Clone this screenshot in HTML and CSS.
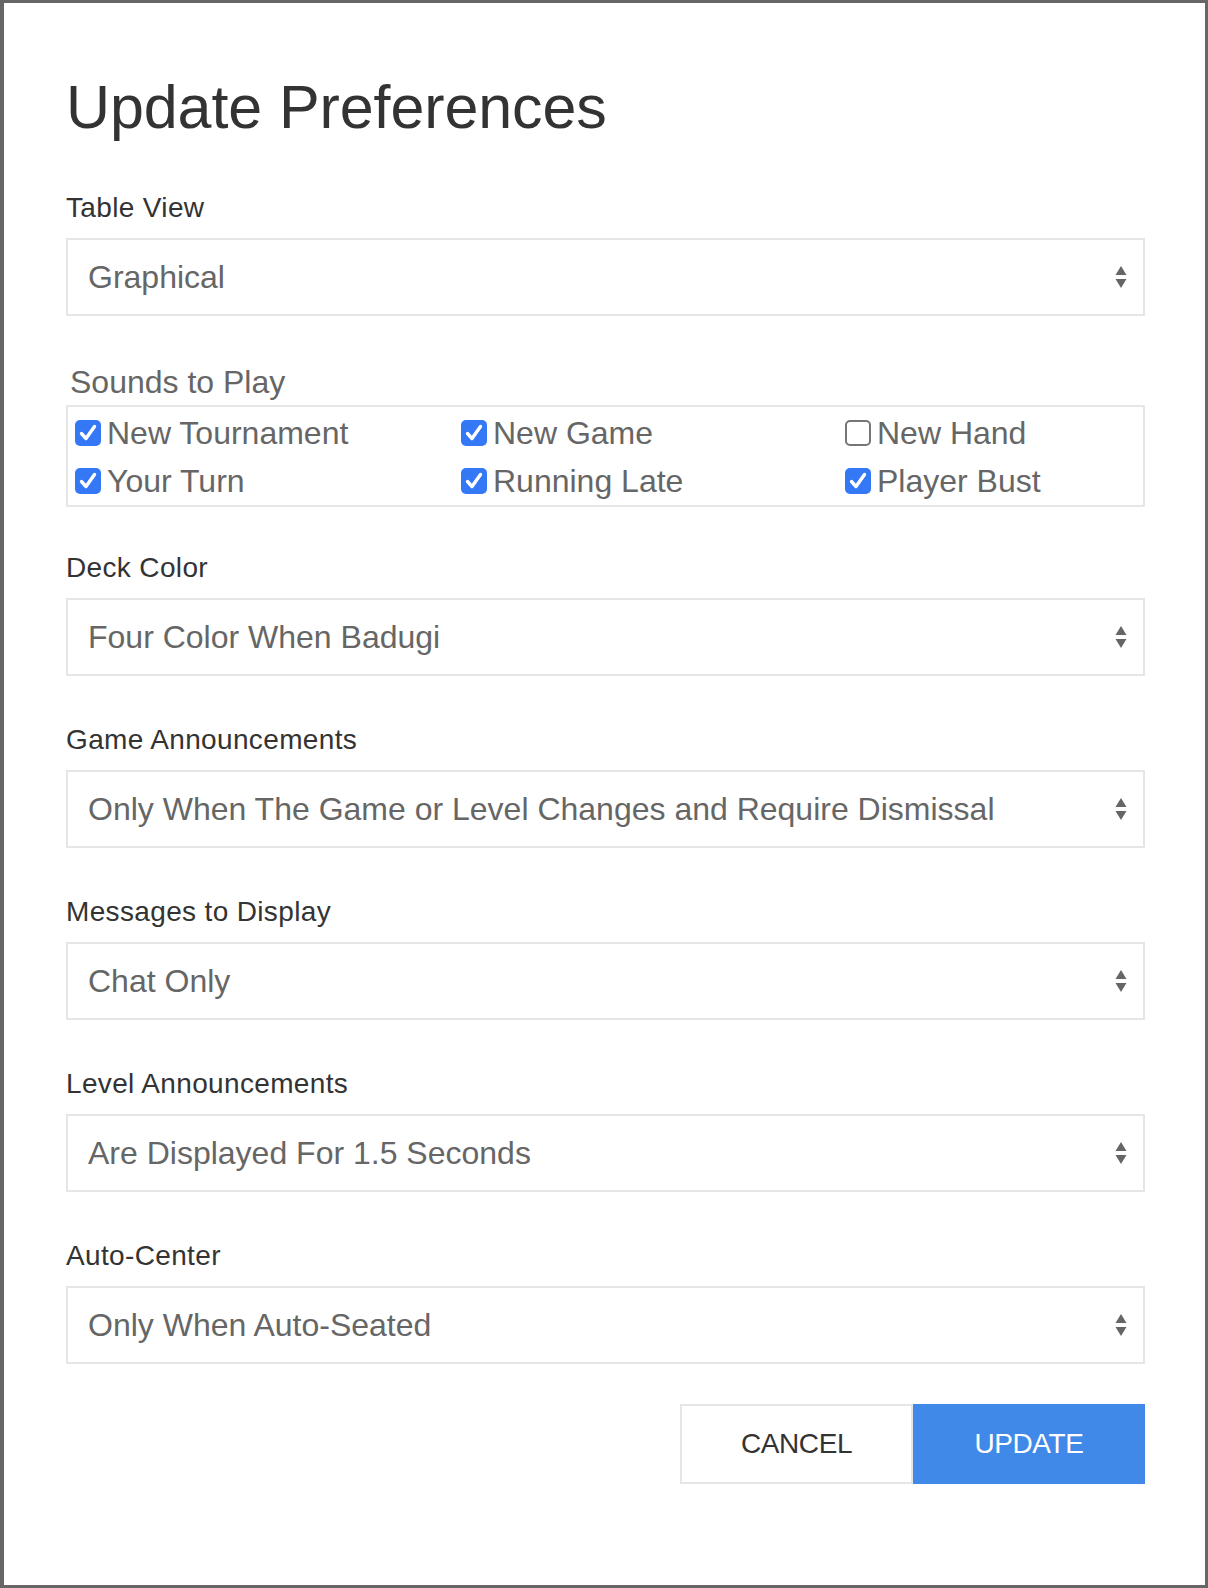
FILE: index.html
```html
<!DOCTYPE html>
<html lang="en">
<head>
<meta charset="utf-8">
<title>Update Preferences</title>
<link rel="stylesheet" href="styles.css">
</head>
<body>
<div class="dialog">
  <h1 class="title">Update Preferences</h1>

  <div class="group">
    <div class="label">Table View</div>
    <div class="select"><span>Graphical</span><svg class="arrow" width="12" height="22" viewBox="0 0 12 22"><path d="M6 0L11.5 9H0.5Z M6 22L11.5 13H0.5Z" fill="#666"/></svg></div>
  </div>

  <div class="group sounds">
    <div class="legend">Sounds to Play</div>
    <div class="checks">
      <div class="check"><span class="box on"><svg width="26" height="26" viewBox="0 0 26 26"><path d="M6.5 13.5L11 18.5L19.5 6.5" fill="none" stroke="#fff" stroke-width="3.4" stroke-linecap="round" stroke-linejoin="round"/></svg></span>New Tournament</div>
      <div class="check"><span class="box on"><svg width="26" height="26" viewBox="0 0 26 26"><path d="M6.5 13.5L11 18.5L19.5 6.5" fill="none" stroke="#fff" stroke-width="3.4" stroke-linecap="round" stroke-linejoin="round"/></svg></span>New Game</div>
      <div class="check"><span class="box off"></span>New Hand</div>
      <div class="check"><span class="box on"><svg width="26" height="26" viewBox="0 0 26 26"><path d="M6.5 13.5L11 18.5L19.5 6.5" fill="none" stroke="#fff" stroke-width="3.4" stroke-linecap="round" stroke-linejoin="round"/></svg></span>Your Turn</div>
      <div class="check"><span class="box on"><svg width="26" height="26" viewBox="0 0 26 26"><path d="M6.5 13.5L11 18.5L19.5 6.5" fill="none" stroke="#fff" stroke-width="3.4" stroke-linecap="round" stroke-linejoin="round"/></svg></span>Running Late</div>
      <div class="check"><span class="box on"><svg width="26" height="26" viewBox="0 0 26 26"><path d="M6.5 13.5L11 18.5L19.5 6.5" fill="none" stroke="#fff" stroke-width="3.4" stroke-linecap="round" stroke-linejoin="round"/></svg></span>Player Bust</div>
    </div>
  </div>

  <div class="group">
    <div class="label">Deck Color</div>
    <div class="select"><span>Four Color When Badugi</span><svg class="arrow" width="12" height="22" viewBox="0 0 12 22"><path d="M6 0L11.5 9H0.5Z M6 22L11.5 13H0.5Z" fill="#666"/></svg></div>
  </div>

  <div class="group">
    <div class="label">Game Announcements</div>
    <div class="select"><span>Only When The Game or Level Changes and Require Dismissal</span><svg class="arrow" width="12" height="22" viewBox="0 0 12 22"><path d="M6 0L11.5 9H0.5Z M6 22L11.5 13H0.5Z" fill="#666"/></svg></div>
  </div>

  <div class="group">
    <div class="label">Messages to Display</div>
    <div class="select"><span>Chat Only</span><svg class="arrow" width="12" height="22" viewBox="0 0 12 22"><path d="M6 0L11.5 9H0.5Z M6 22L11.5 13H0.5Z" fill="#666"/></svg></div>
  </div>

  <div class="group">
    <div class="label">Level Announcements</div>
    <div class="select"><span>Are Displayed For 1.5 Seconds</span><svg class="arrow" width="12" height="22" viewBox="0 0 12 22"><path d="M6 0L11.5 9H0.5Z M6 22L11.5 13H0.5Z" fill="#666"/></svg></div>
  </div>

  <div class="group last">
    <div class="label">Auto-Center</div>
    <div class="select"><span>Only When Auto-Seated</span><svg class="arrow" width="12" height="22" viewBox="0 0 12 22"><path d="M6 0L11.5 9H0.5Z M6 22L11.5 13H0.5Z" fill="#666"/></svg></div>
  </div>

  <div class="actions">
    <button class="btn cancel">CANCEL</button>
    <button class="btn update">UPDATE</button>
  </div>
</div>
</body>
</html>
```

FILE: styles.css
```css
* { box-sizing: border-box; }
html, body { margin: 0; padding: 0; }
body {
  background: #666;
  font-family: "Liberation Sans", Arial, sans-serif;
  width: 1208px;
  height: 1588px;
  overflow: hidden;
}
.dialog {
  width: 1208px;
  height: 1588px;
  background: #fff;
  border-style: solid;
  border-color: #666;
  border-width: 3px 3px 3px 4px;
  padding: 67px 60px 0 62px;
}
.title {
  margin: 0 0 44px 0;
  font-size: 61px;
  line-height: 74px;
  font-weight: 400;
  color: #333;
  letter-spacing: -0.1px;
}
.group { margin-bottom: 44px; }
.group.sounds { margin-bottom: 41px; }
.group.last { margin-bottom: 40px; }
.label {
  font-size: 28px;
  line-height: 40px;
  color: #333;
  margin-bottom: 10px;
  letter-spacing: 0.35px;
}
.select {
  height: 78px;
  border: 2px solid #e6e6e6;
  padding: 0 16px 0 20px;
  display: flex;
  align-items: center;
  justify-content: space-between;
  font-size: 32px;
  color: #666;
}
.legend {
  font-size: 32px;
  line-height: 45px;
  color: #666;
  padding-left: 4px;
}
.checks {
  border: 2px solid #e6e6e6;
  padding: 2px 0 0 7px;
  display: grid;
  grid-template-columns: 386px 384px 1fr;
  font-size: 32px;
  color: #666;
}
.check {
  height: 48px;
  display: flex;
  align-items: center;
  gap: 6px;
  white-space: nowrap;
}
.box {
  width: 26px;
  height: 26px;
  border-radius: 5px;
  flex: none;
  display: block;
}
.box svg { display: block; }
.box.on { background: #3478f6; }
.box.off { border: 2px solid #767676; background: #fff; }
.actions {
  display: flex;
  justify-content: flex-end;
}
.btn {
  height: 80px;
  font-family: inherit;
  font-size: 28px;
  letter-spacing: -0.4px;
  border: none;
  margin: 0;
  padding: 0;
  cursor: pointer;
}
.cancel {
  width: 233px;
  background: #fff;
  color: #333;
  border: 2px solid #e6e6e6;
}
.update {
  width: 232px;
  background: #4189e8;
  color: #fff;
}
```
